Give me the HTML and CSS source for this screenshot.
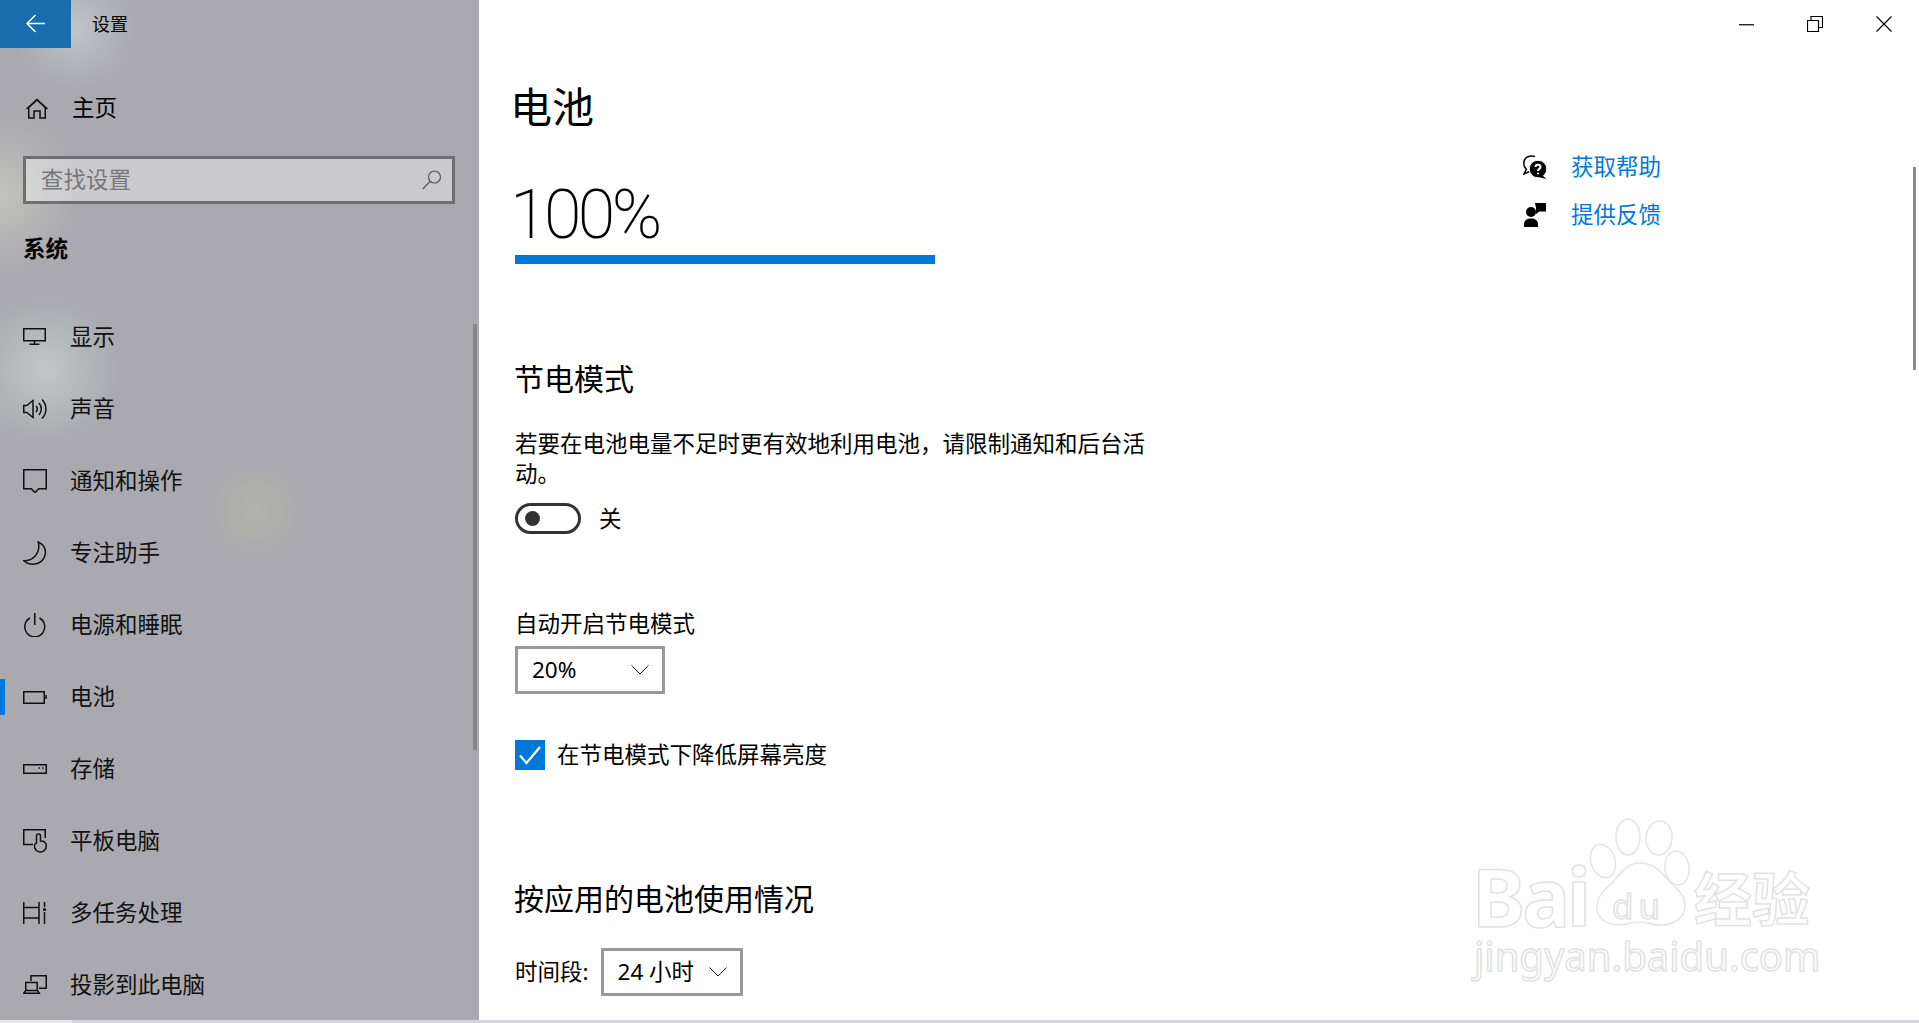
FILE: index.html
```html
<!DOCTYPE html>
<html lang="zh">
<head>
	<meta charset="utf-8">
	<title>设置</title>
	<link rel="stylesheet" href="styles.css">
</head>
<body>
	<div class="app">
		<div class="window">
			<aside class="sidebar">
				<div class="titlebar">
					<div class="back">
						<svg width="20" height="20" viewBox="0 0 20 20"><path d="M1 9.500h18M9.500 1 1 9.500 9.500 18" /></svg>
					</div>
					<span class="app-title">设置</span>
				</div>
				<div class="home-row">
					<svg class="icon" width="24" height="24" viewBox="0 0 24 24"><path d="M2.750 22V11.500L11 4l8.250 7.500V22H14v-7H8v7zM.5 13 11 3.500 21.500 13" /></svg>
					<span>主页</span>
				</div>
				<div class="search">
					<span>查找设置</span>
					<svg width="20" height="20" viewBox="0 0 20 20"><circle cx="12.500" cy="7" r="6" /><path d="M8 11.500.8 19" /></svg>
				</div>
				<div class="section-name">系统</div>
				<nav class="nav">
					<div class="nav-item">
						<svg class="icon" width="24" height="24" viewBox="0 0 24 24"><path d="M.75 3.750h21.500v12H.75zM11.500 16v3M6.500 19.250h10" /></svg>
						<span>显示</span>
					</div>
					<div class="nav-item">
						<svg class="icon" width="24" height="24" viewBox="0 0 24 24"><path d="M.75 8.500h3L10 3.500v17l-6.200-5H.75zM13 9a4.500 4.500 0 0 1 0 6M16 6a9 9 0 0 1 0 12M19 2.500a13.500 13.500 0 0 1 0 19" /></svg>
						<span>声音</span>
					</div>
					<div class="nav-item">
						<svg class="icon" width="24" height="24" viewBox="0 0 24 24"><path d="M.75.75h22.500v19h-7.500L12 23.500 8.250 19.750H.75z" /></svg>
						<span>通知和操作</span>
					</div>
					<div class="nav-item">
						<svg class="icon" width="24" height="24" viewBox="0 0 24 24"><path d="M15.300.8C21 4 23 9 22.300 13 21.500 19 16 23.300 10.500 23.200 6.500 23.200 3 22 .8 19.800 9 20 18 13 15.300.8z" /></svg>
						<span>专注助手</span>
					</div>
					<div class="nav-item">
						<svg class="icon" width="24" height="24" viewBox="0 0 24 24"><path d="M7 5a10 10 0 1 0 9.500 0M11.750 0v12" /></svg>
						<span>电源和睡眠</span>
					</div>
					<div class="nav-item active">
						<svg class="icon" width="24" height="24" viewBox="0 0 24 24"><path d="M.75 6.750h20.500v11.500H.75zM23 10v4" /></svg>
						<span>电池</span>
					</div>
					<div class="nav-item">
						<svg class="icon" width="24" height="24" viewBox="0 0 24 24"><path d="M.75 7.750h22.500v8.500H.75zM15.500 11h1.500M19 11h1.500" /></svg>
						<span>存储</span>
					</div>
					<div class="nav-item">
						<svg class="icon" width="24" height="24" viewBox="0 0 24 24"><path d="M10 15.500H.75V.75h21.500V9M13.500 14V7a2 2 0 0 1 4 0v5c3.500 0 5.750 1.500 5.750 5a5.900 5.900 0 0 1-11.800 0c0-1.500.7-2.500 2.050-3z" /></svg>
						<span>平板电脑</span>
					</div>
					<div class="nav-item">
						<svg class="icon" width="24" height="24" viewBox="0 0 24 24"><path d="M.75 1v22M16 1v22M.75 6.500H16M.75 17H16M21.500 1v5M21.500 11v12" /><circle class="dot" cx="21.500" cy="8.500" r="1.600" /></svg>
						<span>多任务处理</span>
					</div>
					<div class="nav-item">
						<svg class="icon" width="24" height="24" viewBox="0 0 24 24"><path d="M8 8V2.750h15.250v12.500H16M2.750 9.500h11.500v8H2.750zM.75 20.250l2-2.750h11.500l2 2.750z" /></svg>
						<span>投影到此电脑</span>
					</div>
				</nav>
				<div class="side-thumb"></div>
			</aside>
			<main class="content">
				<div class="settings">
					<h1>电池</h1>
					<div class="percent">100%</div>
					<div class="charge-bar"></div>
					<h2 class="saver-title">节电模式</h2>
					<p class="saver-text">若要在电池电量不足时更有效地利用电池，请限制通知和后台活动。</p>
					<div class="toggle-row">
						<div class="toggle"><div class="knob"></div></div>
						<span>关</span>
					</div>
					<div class="auto-label">自动开启节电模式</div>
					<div class="dropdown small">
						<span>20%</span>
						<svg width="18" height="10" viewBox="0 0 18 10"><path d="M.5.5 9 9 17.500.5" /></svg>
					</div>
					<div class="check-row">
						<div class="checkbox">
							<svg width="30" height="30" viewBox="0 0 30 30"><path d="M5 15.500 11.500 23 25 7" /></svg>
						</div>
						<span>在节电模式下降低屏幕亮度</span>
					</div>
					<h2 class="usage-title">按应用的电池使用情况</h2>
					<div class="period-row">
						<span>时间段:</span>
						<div class="dropdown">
							<span>24 小时</span>
							<svg width="18" height="10" viewBox="0 0 18 10"><path d="M.5.5 9 9 17.500.5" /></svg>
						</div>
					</div>
				</div>
				<div class="links">
					<div class="link">
						<svg width="24" height="24" viewBox="0 0 24 24">
							<path class="outline" d="M12 1.500C6-.5.8 3 .8 8.500c0 2.500 1 4.500 2.500 6L1 19l5.500-2.500" />
							<circle class="bubble" cx="15" cy="14" r="8.800" />
							<path d="M19 20 23.500 24 15 22z" />
							<path class="mark" d="M12.500 12c0-1.500 1-2.300 2.500-2.300s2.500.9 2.500 2.200c0 2-2.500 2-2.500 4" />
							<circle class="mark-dot" cx="15" cy="18.500" r="1.100" />
						</svg>
						<span>获取帮助</span>
					</div>
					<div class="link">
						<svg width="24" height="24" viewBox="0 0 24 24">
							<circle cx="8" cy="9" r="5" />
							<path d="M1 24v-3c0-3.500 3-5.500 7-5.500s7 2 7 5.500v3z" />
							<path d="M12 0h11v8.500h-6.500L13 11V5z" />
						</svg>
						<span>提供反馈</span>
					</div>
				</div>
				<div class="window-controls">
					<svg width="15" height="15" viewBox="0 0 15 15"><path d="M0 7.750h15" /></svg>
					<svg width="16" height="16" viewBox="0 0 16 16"><path d="M.5 4.500h11v11H.5zM4 4.500V.5h11.500v11H11.500" /></svg>
					<svg width="16" height="16" viewBox="0 0 16 16"><path d="M.5.500 15.500 15.500M15.500.5.500 15.500" /></svg>
				</div>
				<div class="main-thumb"></div>
				<div class="watermark">
					<span class="mark-bai">Bai</span>
					<svg width="230" height="112" viewBox="0 0 230 112">
						<ellipse cx="156" cy="21" rx="12" ry="18" />
						<ellipse cx="187" cy="22" rx="13" ry="17" transform="rotate(5 187 22)" />
						<ellipse cx="131" cy="45" rx="12" ry="17" transform="rotate(-18 131 45)" />
						<ellipse cx="205" cy="52" rx="12" ry="17" transform="rotate(-8 205 52)" />
						<path d="M167 47c-12 0-18 10-26 19-7 7-16 13-16 25 0 12 10 18 22 18 8 0 12-3 20-3s14 3 22 3c12 0 24-6 24-19 0-11-8-17-15-24-9-9-14-19-31-19z" />
					</svg>
					<span class="mark-du">du</span>
					<span class="mark-cn">经验</span>
					<span class="mark-url">jingyan.baidu.com</span>
				</div>
			</main>
		</div>
		<div class="bottom-strip"><div class="strip-left"></div></div>
	</div>
</body>
</html>
```

FILE: styles.css
```css
* {
	box-sizing: border-box;
}
body {
	margin: 0;
	background-color: #fff;
	color: #000;
	font-family: "Segoe UI", "Noto Sans", "Noto Sans CJK SC", sans-serif;
	font-size: 22.5px;
	line-height: 30px;
}
h1, h2, p {
	margin: 0;
	font-weight: 400;
}
svg {
	flex: none;
	display: block;
	fill: none;
	stroke: #000;
	stroke-width: 1.5;
}
.app {
	width: 1919px;
	height: 1023px;
	display: flex;
	flex-direction: column;
	overflow: hidden;
}
.window {
	flex: 1;
	display: flex;
	min-height: 0;
}
.bottom-strip {
	height: 3px;
	background-color: #d6d6de;
}
.strip-left {
	width: 72px;
	height: 3px;
	background-color: #e6e6e6;
}

/* left pane with the blurred desktop behind it */
.sidebar {
	position: relative;
	width: 479px;
	flex: none;
	background-color: #a9a9af;
	background-image:
		radial-gradient(circle at 45px 370px, rgba(198, 214, 208, 0.7) 0, rgba(198, 214, 208, 0) 75px),
		radial-gradient(circle at 255px 510px, rgba(190, 190, 160, 0.45) 0, rgba(190, 190, 160, 0) 50px),
		radial-gradient(circle at 0 195px, rgba(205, 205, 195, 0.7) 0, rgba(205, 205, 195, 0) 80px),
		radial-gradient(circle at 75px 30px, rgba(215, 222, 228, 0.5) 0, rgba(215, 222, 228, 0) 60px);
}
.titlebar {
	height: 48px;
	display: flex;
	align-items: center;
}
.back {
	width: 71px;
	height: 48px;
	padding: 14px 0 0 26px;
	background-color: #1a6dac;
}
.back svg {
	stroke: #fff;
}
.app-title {
	margin-left: 21px;
	font-size: 18px;
}
.icon {
	margin-right: 23px;
	stroke: #111;
}
.home-row {
	height: 40px;
	margin: 40px 0 0 26px;
	display: flex;
	align-items: center;
	font-size: 22.5px;
}
.home-row .icon {
	margin-right: 22px;
}
.search {
	width: 432px;
	height: 48px;
	margin: 28px 0 0 23px;
	padding: 0 10px 0 15px;
	display: flex;
	align-items: center;
	justify-content: space-between;
	border: 3px solid #6f6f72;
	background-color: rgba(255, 255, 255, 0.4);
	color: #77777a;
}
.search svg {
	stroke: #58585c;
	stroke-width: 1.2;
}
.section-name {
	height: 40px;
	margin: 25px 0 0 23px;
	line-height: 40px;
	font-weight: 700;
}
.nav {
	margin-top: 32px;
}
.nav-item {
	position: relative;
	height: 72px;
	padding-left: 23px;
	display: flex;
	align-items: center;
	color: #111;
}
.active::before {
	content: "";
	position: absolute;
	left: 0;
	top: 18px;
	width: 5px;
	height: 36px;
	background-color: #0078d7;
}
.dot {
	fill: #111;
	stroke: none;
}
.side-thumb {
	position: absolute;
	left: 473px;
	top: 324px;
	width: 4px;
	height: 426px;
	background-color: #87878a;
}

/* right pane */
.content {
	position: relative;
	flex: 1;
	display: flex;
	padding-left: 36px;
}
.settings {
	width: 1008px;
	padding-top: 77px;
}
h1 {
	height: 60px;
	margin-left: -5px;
	line-height: 60px;
	font-size: 42px;
}
.percent {
	height: 78px;
	margin: 39px 0 0 -5px;
	font-family: Roboto, sans-serif;
	line-height: 78px;
	font-size: 68px;
	font-weight: 200;
	letter-spacing: -3.5px;
}
.charge-bar {
	width: 420px;
	height: 9px;
	margin-top: 1px;
	background-color: #0078d7;
}
h2 {
	height: 40px;
	margin-left: -1px;
	line-height: 40px;
	font-size: 30px;
}
.saver-title {
	margin-top: 95px;
}
.saver-text {
	width: 640px;
	margin-top: 30px;
	line-height: 30px;
}
.toggle-row {
	margin-top: 14px;
	display: flex;
	align-items: center;
}
.toggle {
	width: 66px;
	height: 31px;
	margin-right: 18px;
	padding-left: 7px;
	display: flex;
	align-items: center;
	border: 3px solid #333;
	border-radius: 16px;
}
.knob {
	width: 15px;
	height: 15px;
	border-radius: 50%;
	background-color: #333;
}
.auto-label {
	height: 30px;
	margin-top: 75px;
}
.dropdown {
	width: 142px;
	height: 48px;
	padding: 0 13px 0 14px;
	display: flex;
	align-items: center;
	justify-content: space-between;
	border: 3px solid #999;
}
.dropdown svg {
	stroke: #222;
	stroke-width: 1;
}
.small {
	width: 150px;
	margin-top: 7px;
}
.check-row {
	margin-top: 46px;
	display: flex;
	align-items: center;
}
.checkbox {
	width: 30px;
	height: 30px;
	margin-right: 12px;
	background-color: #0078d7;
}
.checkbox svg {
	stroke: #fff;
	stroke-width: 2.2;
}
.usage-title {
	margin-top: 109px;
}
.period-row {
	margin-top: 29px;
	display: flex;
	align-items: center;
	gap: 12px;
}
.links {
	padding-top: 155px;
	display: flex;
	flex-direction: column;
	gap: 24px;
}
.link {
	height: 24px;
	display: flex;
	align-items: center;
	gap: 24px;
	color: #0078d7;
}
.link svg {
	fill: #000;
	stroke: none;
}
.link .outline {
	fill: none;
	stroke: #000;
}
.link .bubble {
	stroke: #fff;
	stroke-width: 1;
}
.link .mark {
	fill: none;
	stroke: #fff;
	stroke-width: 2;
}
.link .mark-dot {
	fill: #fff;
}
.window-controls {
	position: absolute;
	top: 16px;
	right: 27px;
	display: flex;
	align-items: center;
	gap: 53px;
}
.window-controls svg {
	stroke-width: 1.2;
}
.main-thumb {
	position: absolute;
	top: 167px;
	right: 3px;
	width: 3px;
	height: 203px;
	background-color: #8a8a8a;
}

/* faint outlined watermark, bottom right */
.watermark {
	position: absolute;
	left: 993px;
	top: 816px;
	width: 350px;
	height: 170px;
}
.watermark svg {
	position: absolute;
	left: 0;
	top: 0;
	stroke: #e4e4e4;
	stroke-width: 1.5;
	fill: #fff;
}
.mark-bai, .mark-du, .mark-cn, .mark-url {
	position: absolute;
	white-space: nowrap;
	color: #fff;
	-webkit-text-stroke: 1.5px #e2e2e2;
}
.mark-bai {
	left: 0;
	top: 50px;
	font-family: "Noto Sans", sans-serif;
	font-size: 80px;
	font-weight: 700;
	letter-spacing: -3px;
	line-height: 60px;
}
.mark-du {
	left: 140px;
	top: 74px;
	font-family: "DejaVu Sans", sans-serif;
	font-size: 34px;
	letter-spacing: 5px;
	line-height: 34px;
}
.mark-cn {
	left: 222px;
	top: 50px;
	font-family: "Noto Sans CJK SC", sans-serif;
	font-size: 58px;
	font-weight: 700;
	line-height: 60px;
}
.mark-url {
	left: 2px;
	top: 115px;
	font-family: "Noto Sans", sans-serif;
	font-size: 40px;
	line-height: 50px;
}
```
